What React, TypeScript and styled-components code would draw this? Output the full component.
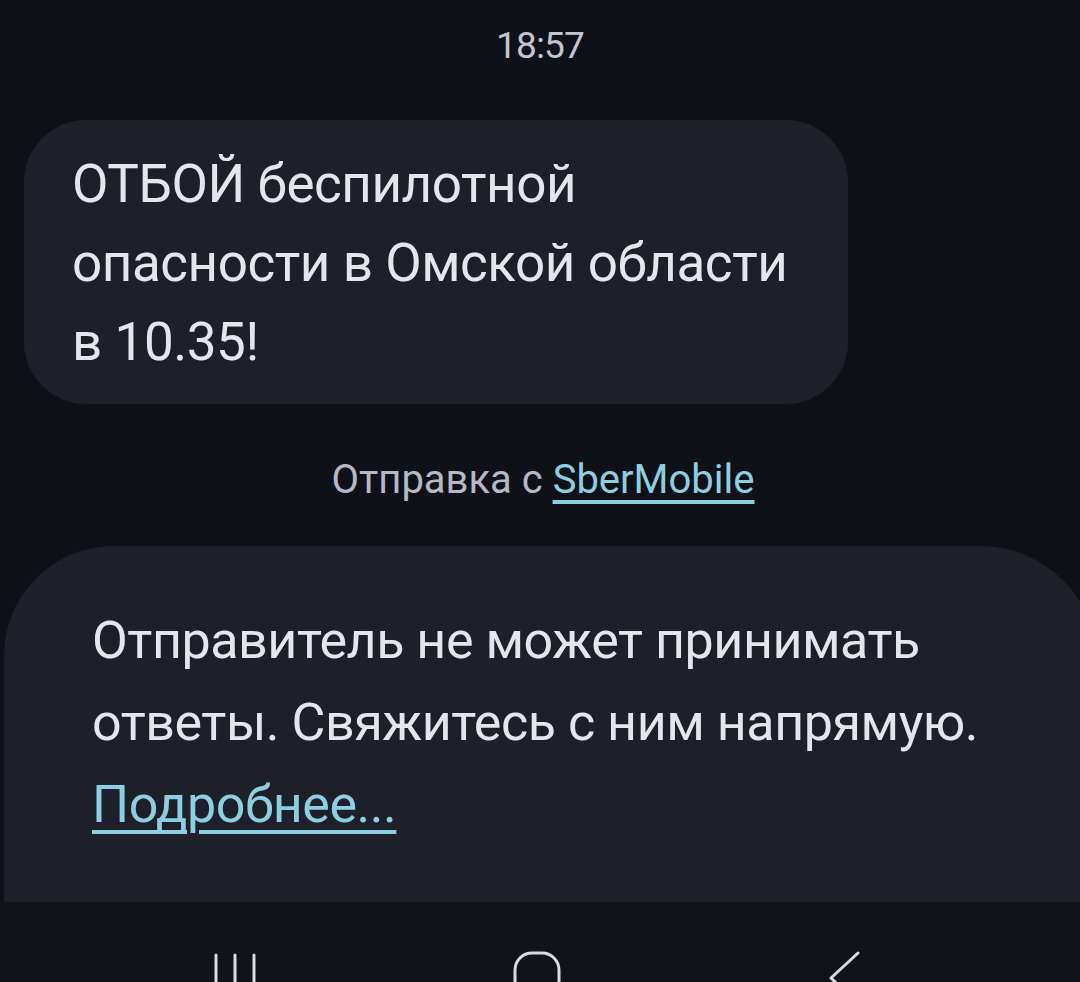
import styled, { createGlobalStyle } from 'styled-components';

const GlobalStyle = createGlobalStyle`
  html, body {
    margin: 0;
    padding: 0;
    height: 982px;
    overflow: hidden;
    background: #0f1119;
  }
  body {
    font-family: Roboto, "Noto Sans", "Liberation Sans", sans-serif;
  }
`;

const Screen = styled.div`
  display: flex;
  flex-direction: column;
  height: 982px;
  overflow: hidden;
  background: #0f1119;
`;

const Thread = styled.div`
  flex: 1;
  display: flex;
  flex-direction: column;
  min-height: 0;
`;

const TimeStamp = styled.div`
  padding-top: 24px;
  text-align: center;
  font-size: 37px;
  color: #c3c6d0;
  letter-spacing: -0.8px;
`;

const Bubble = styled.div`
  margin: 53px 0 0 24px;
  width: 824px;
  box-sizing: border-box;
  padding: 25px 48px 22px 48px;
  background: #1d1f29;
  border-radius: 62px;
  font-size: 53px;
  line-height: 79px;
  letter-spacing: -0.45px;
  color: #e4e6ee;
`;

const SentVia = styled.div`
  margin-top: 52px;
  padding-left: 6px;
  text-align: center;
  font-size: 40px;
  color: #b5b9c6;
`;

const Link = styled.a<{ $thick?: number }>`
  color: #8dcfe2;
  text-decoration: underline;
  text-decoration-thickness: ${(p) => p.$thick ?? 4}px;
  text-underline-offset: ${(p) => (p.$thick ? 8 : 7)}px;
  cursor: pointer;
`;

const Notice = styled.div`
  flex: 1;
  margin: 43px -18px 0 4px;
  padding: 54px 80px 0 88px;
  background: #1d1f29;
  border-radius: 110px 118px 0 0;
  font-size: 52px;
  line-height: 82px;
  letter-spacing: -0.45px;
  color: #e4e6ee;
`;

const NavBar = styled.div`
  height: 80px;
  flex-shrink: 0;
  display: flex;
  align-items: flex-start;
  padding: 48px 0 0 213px;
  box-sizing: border-box;
  background: #121318;
  overflow: hidden;
`;

const NavIcon = styled.svg<{ $gap?: number }>`
  flex-shrink: 0;
  margin-left: ${(p) => p.$gap ?? 0}px;
  color: #d9dbe2;
`;

export default function App() {
  return (
    <>
      <GlobalStyle />
      <Screen>
        <Thread>
          <TimeStamp>18:57</TimeStamp>
          <Bubble>ОТБОЙ беспилотной опасности в Омской области в 10.35!</Bubble>
          <SentVia>
            Отправка с <Link>SberMobile</Link>
          </SentVia>
          <Notice>
            Отправитель не может принимать ответы. Свяжитесь с ним напрямую.{' '}
            <Link $thick={4}>Подробнее...</Link>
          </Notice>
        </Thread>
        <NavBar>
          <NavIcon width="44" height="50" viewBox="0 0 44 50" fill="none">
            <g stroke="currentColor" strokeWidth="3" strokeLinecap="round">
              <line x1="3" y1="5" x2="3" y2="50" />
              <line x1="22" y1="5" x2="22" y2="50" />
              <line x1="41" y1="5" x2="41" y2="50" />
            </g>
          </NavIcon>
          <NavIcon $gap={256} width="48" height="50" viewBox="0 0 48 50" fill="none">
            <rect x="2" y="3" width="44" height="70" rx="17" stroke="currentColor" strokeWidth="3" />
          </NavIcon>
          <NavIcon $gap={268} width="32" height="50" viewBox="0 0 32 50" fill="none">
            <polyline points="29,3 2,28 29,53" stroke="currentColor" strokeWidth="3" strokeLinecap="round" strokeLinejoin="round" />
          </NavIcon>
        </NavBar>
      </Screen>
    </>
  );
}
